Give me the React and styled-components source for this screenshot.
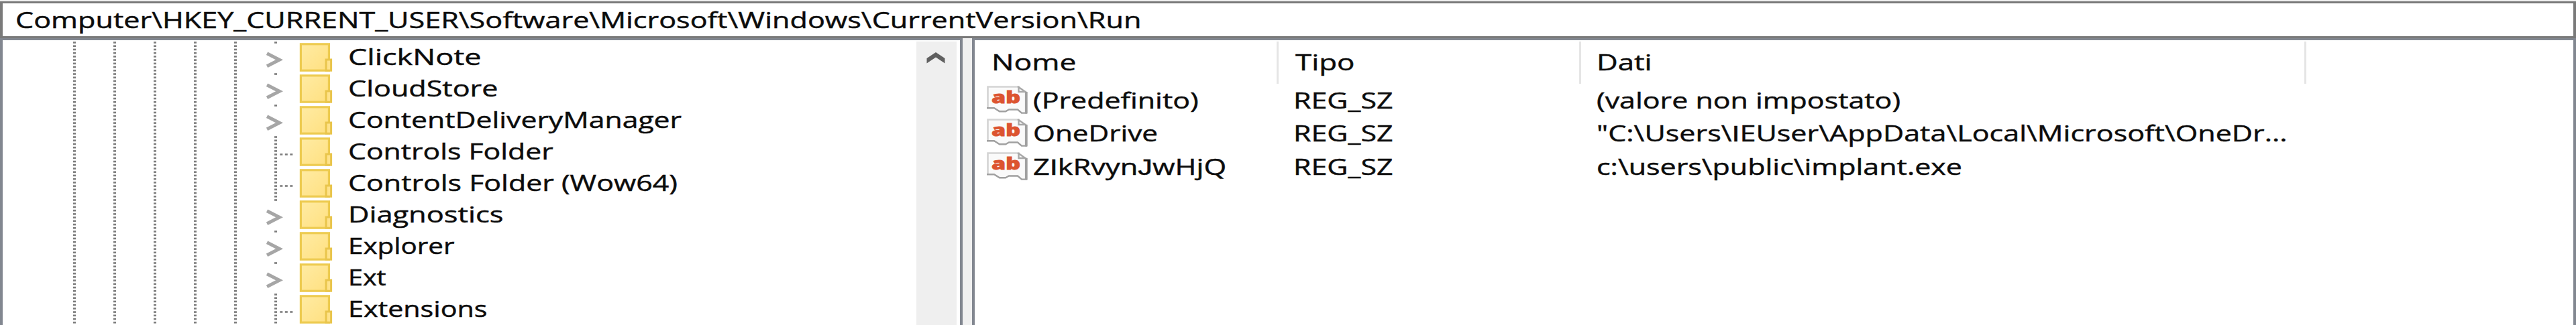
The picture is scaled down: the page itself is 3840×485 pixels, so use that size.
import React, { useLayoutEffect, useRef, useState } from "react";
import styled, { createGlobalStyle } from "styled-components";

const GlobalStyle = createGlobalStyle`
  * { box-sizing: border-box; }
  body { margin: 0; background: #fff; }
`;

const Window = styled.main`
  width: 3840px;
  height: 485px;
  display: flex;
  flex-direction: column;
  overflow: hidden;
  background: #f0f0f0;
  padding-top: 2px;
  font-family: "Open Sans", "Noto Sans", sans-serif;
  font-size: 32.5px;
  line-height: 44px;
  color: #0c0c0c;
`;

const AddressBar = styled.header`
  flex: none;
  height: 55px;
  background: #fff;
  border: solid #7a7a7a;
  border-width: 3px 4px;
  padding: 3px 0 0 19px;
`;

const Panes = styled.div`
  flex: 1;
  min-height: 0;
  display: flex;
  justify-content: space-between;
`;

const TreePane = styled.section`
  width: 1435px;
  display: flex;
  background: #fff;
  border: solid #828790;
  border-width: 3px 4px 0;
  padding: 2px 5px 0 0;
`;

const Tree = styled.ul`
  flex: 1;
  margin: 0;
  padding: 0 0 0 77px;
  list-style: none;
`;

const TreeRow = styled.li`
  display: flex;
  height: 47px;
`;

const Guides = styled.svg`
  flex: none;
  width: 365px;
  height: 47px;
`;

const FolderSvg = styled.svg`
  flex: none;
  width: 50px;
  height: 43px;
  margin: 2px 23px 0 0;
`;

const TreeLabel = styled.div`
  padding-top: 1px;
`;

const ScrollBar = styled.div`
  width: 60px;
  background: #efefef;
  display: flex;
  justify-content: center;
  padding-top: 16px;
  padding-right: 3px;
`;

const ValuesPane = styled.section`
  width: 2391px;
  background: #fff;
  border: solid #828790;
  border-width: 3px 4px 0;
  padding-top: 2px;
`;

const Columns = styled.div`
  display: grid;
  grid-template-columns: 453px 451px 1081px;
`;

const HeaderCell = styled.div`
  height: 63px;
  border-right: 3px solid #e5e5e5;
  padding: 9px 0 0 ${(p) => p.$inset}px;
`;

const ValueRow = styled(Columns)`
  height: 49.6px;
`;

const Cell = styled.div`
  display: flex;
  padding: 2.8px 0 0 ${(p) => p.$inset}px;
`;

const ValueSvg = styled.svg`
  flex: none;
  width: 62px;
  height: 43px;
  margin-right: 7px;
`;

const Stretch = styled.span`
  display: inline-block;
  white-space: pre;
  transform-origin: 0 0;
  -webkit-text-stroke: 0.45px currentColor;
`;

// Capitals I and J without serif or descender.
const PlainCapital = styled.span`
  font-family: "Liberation Sans", sans-serif;
  line-height: 1;
`;

// Widens a label horizontally until it spans the given width.
function Label({ children, width }) {
  const ref = useRef(null);
  const [scale, setScale] = useState(1.4);
  useLayoutEffect(() => {
    setScale(width / ref.current.offsetWidth);
  }, [width, children]);
  return (
    <Stretch ref={ref} style={{ transform: `scaleX(${scale})` }}>
      {children
        .split(/([IJ])/)
        .map((part, i) => (i % 2 ? <PlainCapital key={i}>{part}</PlainCapital> : part))}
    </Stretch>
  );
}

const DOTS = [0, 1, 2, 3, 4, 5, 6, 7, 8];

function RowGuides({ expandable }) {
  return (
    <Guides viewBox="0 0 365 47">
      {[30, 90, 150, 210, 270].map((x) =>
        DOTS.map((d) => (
          <rect key={`${x}-${d}`} x={x - 2} y={0.2 + d * 5.222} width="4" height="2.6" fill="#7d7d7d" />
        ))
      )}
      {(expandable ? [0] : DOTS).map((d) => (
        <rect key={d} x="328" y={0.2 + d * 5.222} width="4" height="2.6" fill="#7d7d7d" />
      ))}
      {expandable ? (
        <path d="M317 17.8 L335.5 27.3 L317 36.8" fill="none" stroke="#a6a6a6" strokeWidth="5" />
      ) : (
        [336.3, 343.8, 351.3].map((x) => (
          <rect key={x} x={x} y="26.2" width="4" height="2.6" fill="#7d7d7d" />
        ))
      )}
    </Guides>
  );
}

function FolderIcon() {
  return (
    <FolderSvg viewBox="0 0 50 43">
      <defs>
        <linearGradient id="folder" x1="0" y1="0" x2="1" y2="1">
          <stop offset="0" stopColor="#ffeba3" />
          <stop offset="1" stopColor="#ffe080" />
        </linearGradient>
      </defs>
      <rect x="2.4" y="1.8" width="42" height="39.4" fill="url(#folder)" stroke="#edcb50" strokeWidth="3.2" />
      <rect x="40" y="25" width="7.6" height="16.2" fill="#ffe28a" stroke="#e9c54c" strokeWidth="3" />
    </FolderSvg>
  );
}

function StringValueIcon() {
  return (
    <ValueSvg viewBox="0 0 62 43">
      <path d="M1.5 1.5 H46 L60 11 V41 H53 L47 36 H32 L26 39.5 H19 L11 33.5 H1.5 Z" fill="#fafafa" />
      <path d="M1.5 34 V1.5 H46" fill="none" stroke="#d4d4d4" strokeWidth="2.6" />
      <path d="M47.5 0.5 V9 H59 M46 1 L59 10" fill="none" stroke="#a8a8a8" strokeWidth="2.4" />
      <path d="M58.8 9 V41.5" fill="none" stroke="#a0a0a0" strokeWidth="3.8" />
      <path d="M0 33.2 H11 L19 38.2 H28 L33 35.5 H46 L52 40.6 H60" fill="none" stroke="#a0a0a0" strokeWidth="2.4" />
      <text
        x="7"
        y="26.4"
        textLength="43"
        lengthAdjust="spacingAndGlyphs"
        fontFamily="Open Sans"
        fontWeight="800"
        fontSize="24.5"
        fill="#dc5430"
        stroke="#dc5430"
        strokeWidth="0.8"
      >
        ab
      </text>
    </ValueSvg>
  );
}

const KEYS = [
  { name: "ClickNote", width: 198, expandable: true },
  { name: "CloudStore", width: 224, expandable: true },
  { name: "ContentDeliveryManager", width: 497, expandable: true },
  { name: "Controls Folder", width: 305 },
  { name: "Controls Folder (Wow64)", width: 491 },
  { name: "Diagnostics", width: 231, expandable: true },
  { name: "Explorer", width: 159, expandable: true },
  { name: "Ext", width: 57, expandable: true },
  { name: "Extensions", width: 208 },
];

const VALUES = [
  { name: "(Predefinito)", nameWidth: 247, data: "(valore non impostato)", dataWidth: 453 },
  { name: "OneDrive", nameWidth: 186, data: "\"C:\\Users\\IEUser\\AppData\\Local\\Microsoft\\OneDr...", dataWidth: 1030 },
  { name: "ZIkRvynJwHjQ", nameWidth: 288, data: "c:\\users\\public\\implant.exe", dataWidth: 545 },
];

export default function App() {
  return (
    <>
      <GlobalStyle />
      <Window>
        <AddressBar>
          <Label width={1679}>
            {"Computer\\HKEY_CURRENT_USER\\Software\\Microsoft\\Windows\\CurrentVersion\\Run"}
          </Label>
        </AddressBar>
        <Panes>
          <TreePane>
            <Tree>
              {KEYS.map((k) => (
                <TreeRow key={k.name}>
                  <RowGuides expandable={k.expandable} />
                  <FolderIcon />
                  <TreeLabel>
                    <Label width={k.width}>{k.name}</Label>
                  </TreeLabel>
                </TreeRow>
              ))}
            </Tree>
            <ScrollBar>
              <svg width="28" height="17" viewBox="0 0 28 17">
                <path d="M14 0 L27.5 9 V16.5 L14 7.5 L0.5 16.5 V9 Z" fill="#606060" />
              </svg>
            </ScrollBar>
          </TreePane>
          <ValuesPane>
            <Columns>
              <HeaderCell $inset={25}>
                <Label width={126}>Nome</Label>
              </HeaderCell>
              <HeaderCell $inset={25}>
                <Label width={89}>Tipo</Label>
              </HeaderCell>
              <HeaderCell $inset={23}>
                <Label width={82}>Dati</Label>
              </HeaderCell>
            </Columns>
            {VALUES.map((v) => (
              <ValueRow key={v.name}>
                <Cell $inset={18}>
                  <StringValueIcon />
                  <Label width={v.nameWidth}>{v.name}</Label>
                </Cell>
                <Cell $inset={22}>
                  <Label width={148}>REG_SZ</Label>
                </Cell>
                <Cell $inset={23}>
                  <Label width={v.dataWidth}>{v.data}</Label>
                </Cell>
              </ValueRow>
            ))}
          </ValuesPane>
        </Panes>
      </Window>
    </>
  );
}
